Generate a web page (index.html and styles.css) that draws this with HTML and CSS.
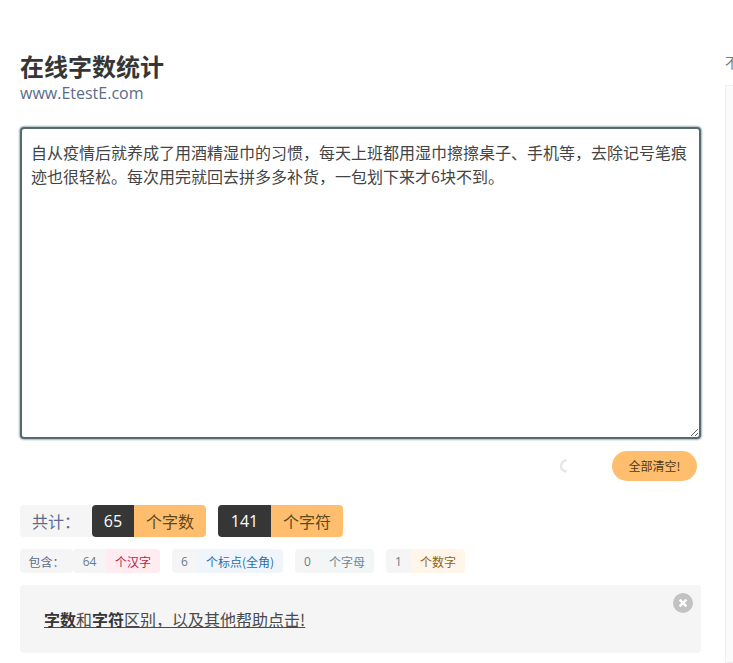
FILE: index.html
```html
<!DOCTYPE html>
<html lang="zh">
<head>
<meta charset="utf-8">
<title>在线字数统计</title>
<link rel="stylesheet" href="styles.css">
</head>
<body>
<div class="page">
  <main class="main">
    <h1 class="title">在线字数统计</h1>
    <p class="subtitle">www.EtestE.com</p>
    <textarea class="input" spellcheck="false">自从疫情后就养成了用酒精湿巾的习惯，每天上班都用湿巾擦擦桌子、手机等，去除记号笔痕迹也很轻松。每次用完就回去拼多多补货，一包划下来才6块不到。</textarea>
    <div class="actions">
      <svg class="spinner" viewBox="0 0 13 14" width="13" height="14"><path d="M7.5 1.5A5.5 5.5 0 0 0 7.5 12.5" fill="none" stroke="#e6e6e6" stroke-width="2.4"/></svg>
      <button class="clear" type="button">全部清空!</button>
    </div>
    <div class="tags big">
      <span class="tag label">共计：</span>
      <span class="group"><span class="tag dark n1">65</span><span class="tag warn">个字数</span></span>
      <span class="group"><span class="tag dark n2">141</span><span class="tag warn">个字符</span></span>
    </div>
    <div class="tags small">
      <span class="tag s-label">包含：</span>
      <span class="group tight"><span class="tag s-num">64</span><span class="tag pink">个汉字</span></span>
      <span class="group"><span class="tag s-num">6</span><span class="tag blue">个标点(全角)</span></span>
      <span class="group"><span class="tag s-num">0</span><span class="tag grey">个字母</span></span>
      <span class="group"><span class="tag s-num">1</span><span class="tag cream">个数字</span></span>
    </div>
    <div class="note">
      <a class="help" href="#"><strong>字数</strong>和<strong>字符</strong>区别，以及其他帮助点击!</a>
      <button class="close" type="button" aria-label="关闭">
        <svg viewBox="0 0 20 20" width="20" height="20"><path d="M6.6 6.6l6.8 6.8M13.4 6.6l-6.8 6.8" stroke="#fff" stroke-width="2.4"/></svg>
      </button>
    </div>
  </main>
  <aside class="side">
    <p class="side-head">不</p>
    <div class="side-box"></div>
  </aside>
</div>
</body>
</html>
```
FILE: styles.css
```css
* { box-sizing: border-box; }
html, body { margin: 0; height: 100%; overflow: hidden; background: #fff; }
body { font-family: "Open Sans", "Noto Sans CJK SC", sans-serif; color: #4a4a4a; font-size: 16px; }
.page { display: flex; height: 663px; width: 733px; overflow: hidden; }
.main { width: 701px; flex: none; padding: 51px 0 0 20px; }
.title { margin: 0; font-family: "Noto Sans CJK SC", sans-serif; font-size: 24px; font-weight: 700; line-height: 30px; color: #363636; }
.subtitle { margin: 0; font-size: 16px; line-height: 24px; color: #5a6b8c; height: 46px; }
.input { display: block; width: 681px; height: 312px; padding: 11px 11px 11px 9px; border: 2px solid #566a70; border-radius: 4px; box-shadow: 0 0 0 1px #b8c8cb, 0 0 0 2px #e8eef0; outline: none; resize: vertical; font-family: "Noto Sans CJK SC", sans-serif; font-size: 16px; line-height: 24px; color: #444; background: #fff; }
.actions { display: flex; justify-content: flex-end; align-items: center; height: 30px; margin-top: 12px; padding-right: 4px; }
.spinner { flex: none; margin-right: 40px; }
.clear { width: 85px; height: 30px; border: 0; border-radius: 15px; padding: 0 0 2px; background: #ffbe6e; color: #4a3a20; font-family: "Noto Sans CJK SC", sans-serif; font-size: 12px; }
.tags { display: flex; }
.tag { display: flex; align-items: center; justify-content: center; font-family: "Noto Sans CJK SC", "Open Sans", sans-serif; }
.group { display: flex; border-radius: 4px; overflow: hidden; }
.big { margin-top: 24px; height: 32px; gap: 12px; font-size: 16px; }
.big .label { width: 72px; margin-right: -12px; background: #f5f5f5; color: #5a6b8c; border-radius: 4px 0 0 4px; }
.dark { background: #363636; color: #fff; font-family: "Open Sans", sans-serif; }
.n1 { width: 42px; }
.n2 { width: 53px; }
.warn { width: 72px; background: #ffbe6e; color: #5a4a20; }
.small { margin-top: 12px; height: 24px; gap: 12px; font-size: 12px; }
.s-label { width: 53px; margin-right: -12px; background: #f5f5f5; color: #5a6b8c; border-radius: 4px; }
.s-num { min-width: 25px; padding: 0 8px; background: #f5f5f5; color: #6b7a90; font-family: "Open Sans", sans-serif; }
.tight .s-num { width: 33px; }
.pink { width: 54px; background: #feecf0; color: #b8264a; }
.blue { width: 86px; background: #eff5fb; color: #296fa8; }
.grey { width: 54px; background: #f2f6f7; color: #6f8590; }
.cream { width: 54px; background: #fff5e8; color: #8a6420; }
.note { position: relative; margin-top: 12px; width: 681px; height: 68px; padding: 22px 24px; background: #f5f5f5; border-radius: 4px; line-height: 24px; font-family: "Noto Sans CJK SC", sans-serif; }
.help { color: #4a4a4a; text-decoration: underline; }
.help strong { color: #363636; font-weight: 700; }
.close { position: absolute; top: 8px; right: 8px; width: 20px; height: 20px; padding: 0; border: 0; border-radius: 50%; background: #c2c2c2; display: flex; }
.side { margin-left: 24px; width: 200px; flex: none; }
.side-head { margin: 0; padding-top: 52px; height: 85px; font-family: "Noto Sans CJK SC", sans-serif; font-size: 14px; line-height: 20px; color: #777; }
.side-box { height: 578px; background: #fbfbfb; border: 1px solid #f0f0f0; }
```
